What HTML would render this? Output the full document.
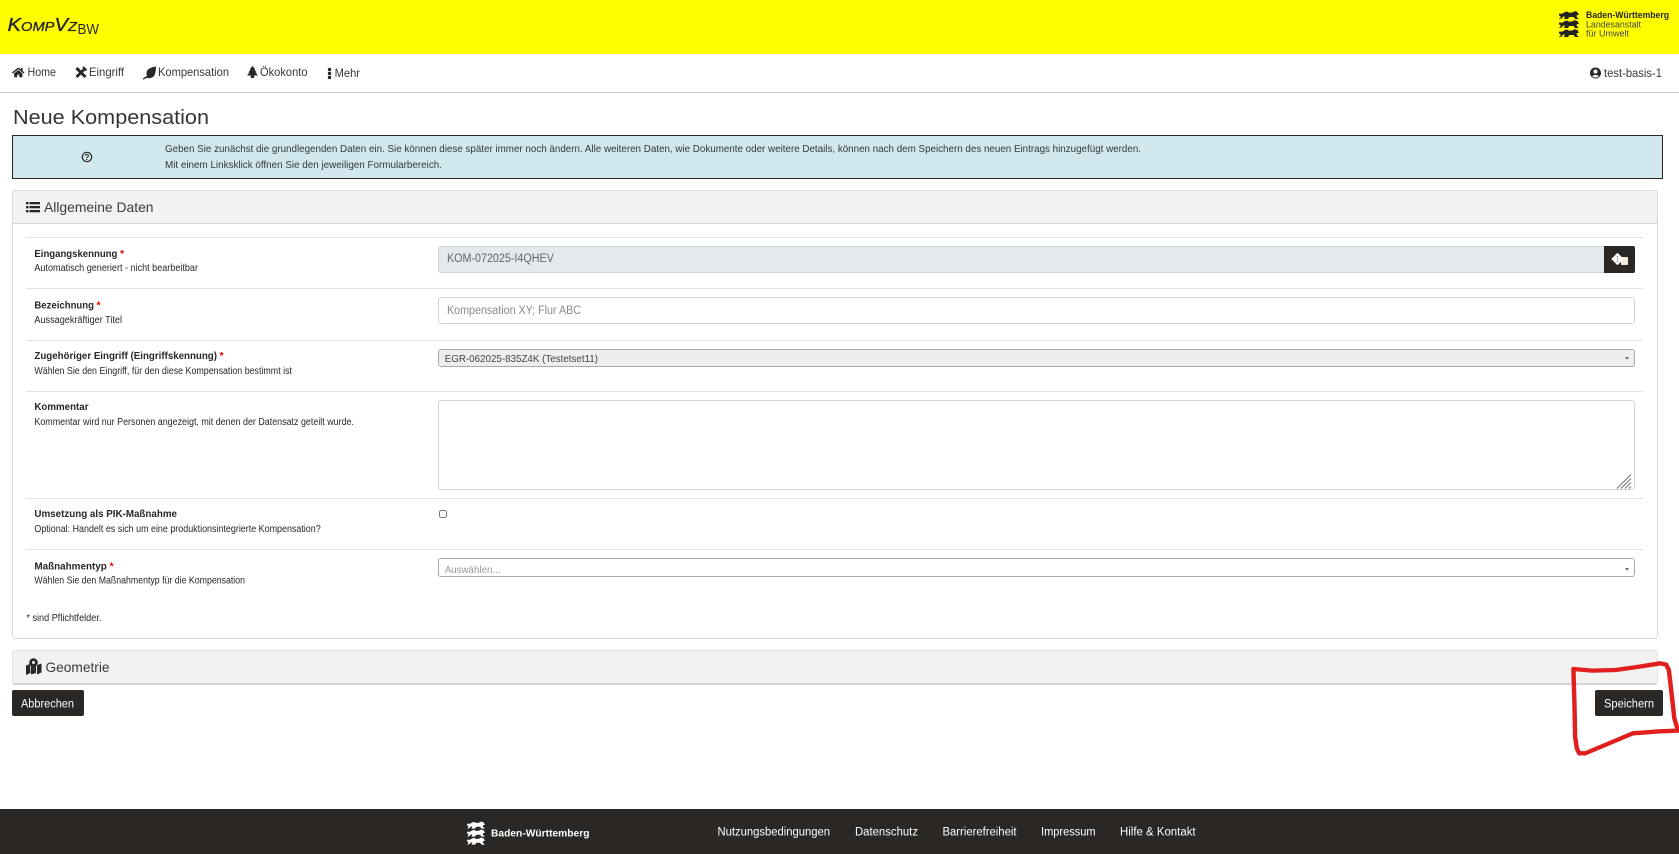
<!DOCTYPE html>
<html lang="de"><head><meta charset="utf-8"><title>Neue Kompensation</title>
<style>
html,body{margin:0;padding:0;background:#fff}
body{width:1679px;height:854px;position:relative;overflow:hidden;font-family:"Liberation Sans",sans-serif;color:#2a2725}
.b{position:absolute;box-sizing:border-box}
.hr{position:absolute;left:26px;width:1617px;height:1px;background:#e1e2e4}
svg.o{position:absolute;left:0;top:0}
svg text{font-family:"Liberation Sans",sans-serif;fill:#2a2725}
.lb{font-weight:bold;font-size:10.5px}
.sm{font-size:9.8px}
.nv{font-size:11.8px;fill:#34383c!important}
.al{font-size:10.4px;fill:#33383b!important}
.st{fill:#e00000!important;font-size:10.5px;font-weight:bold}
.h5{font-size:14px;fill:#3a3a3a!important}
.inp{font-size:11.5px;fill:#5f656b!important}
.ft{font-size:11.5px;fill:#fff!important}
</style></head><body>
<div class="b" style="left:0;top:0;width:1679px;height:54px;background:#ff0"></div>
<div class="b" style="left:0;top:92px;width:1679px;height:1px;background:#c9c6bf"></div>
<div class="b" style="left:12px;top:135px;width:1651px;height:44px;background:#d1e9ee;border:1px solid #2a2725"></div>
<div class="b" style="left:12px;top:190px;width:1646px;height:449px;border:1px solid #dddcdb;border-radius:3px"></div>
<div class="b" style="left:12px;top:190px;width:1646px;height:34px;background:#f3f2f1;border:1px solid #dddcdb;border-bottom:1px solid #d4d4d4;border-radius:3px 3px 0 0"></div>
<div class="hr" style="top:237px"></div><div class="hr" style="top:288px"></div><div class="hr" style="top:340px"></div><div class="hr" style="top:391px"></div><div class="hr" style="top:498px"></div><div class="hr" style="top:549px"></div>
<div class="b" style="left:438px;top:246px;width:1167px;height:27px;background:#e6e9ec;border:1px solid #ced4da;border-radius:3px 0 0 3px"></div>
<div class="b" style="left:1604px;top:246px;width:31px;height:27px;background:#2a2725;border-radius:0 2px 2px 0"></div>
<div class="b" style="left:438px;top:297px;width:1197px;height:27px;border:1px solid #ced4da;border-radius:3px"></div>
<div class="b" style="left:438px;top:349px;width:1197px;height:18px;background:#eee;border:1px solid #aaa;border-radius:3px"></div>
<div class="b" style="left:438px;top:400px;width:1197px;height:90px;border:1px solid #ced4da;border-radius:3px"></div>
<input type="checkbox" class="b" style="left:439px;top:510px;width:8px;height:8px;margin:0">
<div class="b" style="left:438px;top:558px;width:1197px;height:19px;border:1px solid #aaa;border-radius:3px"></div>
<div class="b" style="left:12px;top:650px;width:1646px;height:35px;background:#f3f2f1;border:1px solid #e2e1e0;border-bottom:2px solid #d4d4d4;border-radius:3px"></div>
<div class="b" style="left:12px;top:690px;width:72px;height:26px;background:#2a2725;border-radius:2px"></div>
<div class="b" style="left:1595px;top:690px;width:68px;height:26px;background:#2a2725;border-radius:2px"></div>
<div class="b" style="left:0;top:809px;width:1679px;height:45px;background:#2a2725"></div>

<svg class="o" width="1679" height="854" viewBox="0 0 1679 854" xmlns="http://www.w3.org/2000/svg">
<defs>
<symbol id="lion" viewBox="0 0 60 24"><path d="M0 8h10l5-3q4-4 10-3l4 3h10q5-5 12-4l5 3 4 8h-6l-1 3 1 4 5 4v1h-11l-4-6h-13l-4 6h-12l3-7h-6l-3 5-8 2v-2l4-3-1-4-5-2z"/></symbol>
</defs>
<!-- logo -->
<text x="7.500" y="31" font-size="18" font-style="italic" stroke="#2a2725" stroke-width=".35" textLength="69.500" lengthAdjust="spacingAndGlyphs">K<tspan font-size="13">OMP</tspan>V<tspan font-size="13">Z</tspan></text>
<text x="77.500" y="34" font-size="14.500" textLength="21.500" lengthAdjust="spacingAndGlyphs">BW</text>
<g fill="#222"><use href="#lion" x="1559" y="11" width="20" height="8"/><use href="#lion" x="1559" y="20" width="20" height="8"/><use href="#lion" x="1559" y="29" width="20" height="8"/></g>
<text x="1586" y="18" font-size="9" font-weight="bold" textLength="83" lengthAdjust="spacingAndGlyphs">Baden-Württemberg</text>
<text x="1586" y="27.500" font-size="9" textLength="55" lengthAdjust="spacingAndGlyphs" style="fill:#444">Landesanstalt</text>
<text x="1586" y="36.500" font-size="9" textLength="43" lengthAdjust="spacingAndGlyphs" style="fill:#444">für Umwelt</text>
<!-- nav -->
<svg x="12" y="67" width="12.500" height="11" viewBox="0 0 576 512" fill="#2a2725"><path d="M280.37 148.26L96 300.11V464a16 16 0 0 0 16 16l112.06-.29a16 16 0 0 0 15.92-16V368a16 16 0 0 1 16-16h64a16 16 0 0 1 16 16v95.64a16 16 0 0 0 16 16.05L464 480a16 16 0 0 0 16-16V300L295.67 148.26a12.19 12.19 0 0 0-15.3 0zM571.6 251.47L488 182.56V44.05a12 12 0 0 0-12-12h-56a12 12 0 0 0-12 12v72.61L318.47 43a48 48 0 0 0-61 0L4.34 251.47a12 12 0 0 0-1.6 16.9l25.5 31A12 12 0 0 0 45.15 301l235.22-193.74a12.19 12.19 0 0 1 15.3 0L530.9 301a12 12 0 0 0 16.9-1.6l25.5-31a12 12 0 0 0-1.7-16.93z"/></svg>
<text class="nv" x="27.500" y="76" textLength="28.500" lengthAdjust="spacingAndGlyphs">Home</text>
<g transform="translate(75,66.500)" fill="none" stroke="#2a2725"><path d="M1.500 1.500 10.500 10.500" stroke-width="3"/><path d="M1.500 10.500 9 3" stroke-width="2.800"/><path d="M8 .5l3.500 3.500" stroke-width="2"/></g>
<text class="nv" x="89" y="76" textLength="35" lengthAdjust="spacingAndGlyphs">Eingriff</text>
<path d="M143 78.500q2.500-2 4-2.800 -2-5 3-7.500 3-1.500 6-1.700 0 8-3 10.500 -3 2-6 .7 -2 1-4 2z" fill="#2a2725"/>
<text class="nv" x="158" y="76" textLength="71" lengthAdjust="spacingAndGlyphs">Kompensation</text>
<path d="M252.500 66l2.900 3.500h-1l2.200 3h-1l2.400 3h-3.800v2.500h-3.400v-2.500h-3.800l2.400-3h-1l2.200-3h-1z" fill="#2a2725"/>
<text class="nv" x="260" y="76" textLength="47.500" lengthAdjust="spacingAndGlyphs">Ökokonto</text>
<g fill="#2a2725"><circle cx="329.500" cy="69.500" r="1.700"/><circle cx="329.500" cy="73.500" r="1.700"/><circle cx="329.500" cy="77.500" r="1.700"/></g>
<text class="nv" x="334.600" y="77" textLength="25.400" lengthAdjust="spacingAndGlyphs">Mehr</text>
<circle cx="1595.500" cy="73" r="5.500" fill="#2a2725"/><circle cx="1595.500" cy="71.500" r="2" fill="#fff"/><path d="M1592 76.300q3.500-2.800 7 0q-3.500 2.600-7 0z" fill="#fff"/>
<text class="nv" x="1604" y="77" textLength="58" lengthAdjust="spacingAndGlyphs">test-basis-1</text>
<!-- title -->
<text x="13" y="124" font-size="20" textLength="196" lengthAdjust="spacingAndGlyphs" style="fill:#363636">Neue Kompensation</text>
<!-- alert -->
<circle cx="87" cy="157" r="4.700" fill="none" stroke="#2a2725" stroke-width="1.200"/>
<text x="87" y="160" font-size="8" font-weight="bold" text-anchor="middle">?</text>
<text class="al" x="165" y="152" textLength="976" lengthAdjust="spacingAndGlyphs">Geben Sie zunächst die grundlegenden Daten ein. Sie können diese später immer noch ändern. Alle weiteren Daten, wie Dokumente oder weitere Details, können nach dem Speichern des neuen Eintrags hinzugefügt werden.</text>
<text class="al" x="165" y="168" textLength="277" lengthAdjust="spacingAndGlyphs">Mit einem Linksklick öffnen Sie den jeweiligen Formularbereich.</text>
<!-- card head -->
<g fill="#2a2725"><rect x="26" y="202" width="2.500" height="2.300"/><rect x="26" y="206" width="2.500" height="2.300"/><rect x="26" y="210" width="2.500" height="2.300"/><rect x="29.500" y="202" width="10.500" height="2.300"/><rect x="29.500" y="206" width="10.500" height="2.300"/><rect x="29.500" y="210" width="10.500" height="2.300"/></g>
<text class="h5" x="44" y="212" textLength="109.500" lengthAdjust="spacingAndGlyphs">Allgemeine Daten</text>
<!-- rows -->
<text class="lb" x="34.400" y="257.200" textLength="83" lengthAdjust="spacingAndGlyphs">Eingangskennung</text><text class="st" x="120" y="257.200">*</text>
<text class="sm" x="34.400" y="271.200" textLength="163.600" lengthAdjust="spacingAndGlyphs">Automatisch generiert - nicht bearbeitbar</text>
<text class="lb" x="34.400" y="308.300" textLength="59.600" lengthAdjust="spacingAndGlyphs">Bezeichnung</text><text class="st" x="96.500" y="308.300">*</text>
<text class="sm" x="34.400" y="323.200" textLength="87.600" lengthAdjust="spacingAndGlyphs">Aussagekräftiger Titel</text>
<text class="lb" x="34.400" y="359.200" textLength="182.600" lengthAdjust="spacingAndGlyphs">Zugehöriger Eingriff (Eingriffskennung)</text><text class="st" x="219.500" y="359.200">*</text>
<text class="sm" x="34.400" y="374.200" textLength="257.600" lengthAdjust="spacingAndGlyphs">Wählen Sie den Eingriff, für den diese Kompensation bestimmt ist</text>
<text class="lb" x="34.400" y="410" textLength="54.100" lengthAdjust="spacingAndGlyphs">Kommentar</text>
<text class="sm" x="34.400" y="425" textLength="319.600" lengthAdjust="spacingAndGlyphs">Kommentar wird nur Personen angezeigt, mit denen der Datensatz geteilt wurde.</text>
<text class="lb" x="34.400" y="517" textLength="142.600" lengthAdjust="spacingAndGlyphs">Umsetzung als PIK-Maßnahme</text>
<text class="sm" x="34.400" y="532" textLength="286.300" lengthAdjust="spacingAndGlyphs">Optional: Handelt es sich um eine produktionsintegrierte Kompensation?</text>
<text class="lb" x="34.400" y="569.300" textLength="72.400" lengthAdjust="spacingAndGlyphs">Maßnahmentyp</text><text class="st" x="109.500" y="569.300">*</text>
<text class="sm" x="34.400" y="583.300" textLength="210.600" lengthAdjust="spacingAndGlyphs">Wählen Sie den Maßnahmentyp für die Kompensation</text>
<text class="sm" x="26.400" y="621" textLength="75" lengthAdjust="spacingAndGlyphs">* sind Pflichtfelder.</text>
<!-- field values -->
<text class="inp" x="447" y="262" textLength="106.800" lengthAdjust="spacingAndGlyphs">KOM-072025-I4QHEV</text>
<text class="inp" x="447" y="314" textLength="134" lengthAdjust="spacingAndGlyphs" style="fill:#858b91!important">Kompensation XY; Flur ABC</text>
<text x="444.700" y="362" font-size="10.500" textLength="153.300" lengthAdjust="spacingAndGlyphs" style="fill:#444!important">EGR-062025-835Z4K (Testetset11)</text>
<text x="444.700" y="573" font-size="10.500" textLength="55.900" lengthAdjust="spacingAndGlyphs" style="fill:#999!important">Auswählen...</text>
<path d="M1624.800 357h4.400l-2.200 2.800z" fill="#777"/><path d="M1624.800 568h4.400l-2.200 2.800z" fill="#777"/>
<path d="M1617 488.500l14-14M1621 488.500l10-10M1625 488.500l6-6M1629 488.500l2-2" stroke="#777" stroke-width="1.100" fill="none"/>
<!-- dice -->
<rect x="1621" y="257" width="7" height="8" rx="1" fill="#f6eedd"/>
<path d="M1617.500 253.500l5.500 5.500-5.500 5.500-5.500-5.500z" fill="#fff" stroke="#fff" stroke-linejoin="round"/>
<circle cx="1617.500" cy="256.500" r=".7" fill="#777"/><circle cx="1617.500" cy="259" r=".7" fill="#777"/><circle cx="1617.500" cy="261.500" r=".7" fill="#777"/>
<!-- geometry -->
<path d="M26 665.500l4-1.500 .5 9-4.500 2zM31 665l1.500 3 1 1.500 1-1.500 1.500-2v7l-5 1.500zM37 665l4.500-1.500v9l-4.500 2z" fill="#2a2725"/>
<path d="M33.500 658.300a4.300 4.300 0 0 1 4.300 4.300c0 2-2.800 4.600-4.300 6.700-1.500-2.100-4.300-4.700-4.300-6.700a4.300 4.300 0 0 1 4.300-4.300z" fill="#2a2725"/><circle cx="33.500" cy="662.500" r="1.500" fill="#f3f2f1"/>
<text class="h5" x="45.500" y="672" textLength="64" lengthAdjust="spacingAndGlyphs">Geometrie</text>
<text x="21" y="707.300" font-size="11.500" textLength="53" lengthAdjust="spacingAndGlyphs" style="fill:#fff">Abbrechen</text>
<text x="1604" y="707.300" font-size="11.500" textLength="50" lengthAdjust="spacingAndGlyphs" style="fill:#fff">Speichern</text>
<!-- footer -->
<g fill="#fff"><use href="#lion" x="467" y="821" width="18" height="8"/><use href="#lion" x="467" y="829" width="18" height="8"/><use href="#lion" x="467" y="837" width="18" height="8"/></g>
<text x="491" y="836.700" font-size="10.500" font-weight="bold" textLength="98.500" lengthAdjust="spacingAndGlyphs" style="fill:#fff">Baden-Württemberg</text>
<text class="ft" x="717.500" y="835.700" textLength="112.500" lengthAdjust="spacingAndGlyphs">Nutzungsbedingungen</text>
<text class="ft" x="855" y="835.700" textLength="63" lengthAdjust="spacingAndGlyphs">Datenschutz</text>
<text class="ft" x="942.500" y="835.700" textLength="74" lengthAdjust="spacingAndGlyphs">Barrierefreiheit</text>
<text class="ft" x="1041" y="835.700" textLength="54.600" lengthAdjust="spacingAndGlyphs">Impressum</text>
<text class="ft" x="1120" y="835.700" textLength="75.600" lengthAdjust="spacingAndGlyphs">Hilfe &amp; Kontakt</text>
<!-- red annotation -->
<g transform="translate(1480,470) scale(.3397,.3333)"><path d="M275 597L330 602L400 600L470 590L530 580L548 584L556 600L565 680L572 745L583 782L530 784L450 790L380 820L310 850L292 850L285 835L280 800L278 700Z" fill="none" stroke="#e21f1f" stroke-width="13" stroke-linejoin="round"/></g>
</svg>
</body></html>
